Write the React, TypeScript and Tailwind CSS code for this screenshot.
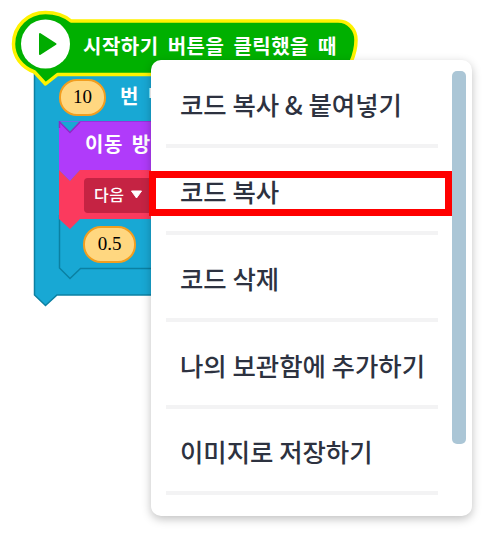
const items = ["코드 복사 & 붙여넣기", "코드 복사", "코드 삭제", "나의 보관함에 추가하기", "이미지로 저장하기"];

const blockFont = "[font-family:'Noto_Sans_CJK_KR',sans-serif]";

function Blocks() {
  return (
    <svg className="absolute left-0 top-0" width="488" height="535" viewBox="0 0 488 535">
      {/* blue loop */}
      <path
        d="M34.5 70H360V295H57L45.5 305.5L34.5 295Z"
        fill="#18a8d4"
        stroke="#0b80a2"
        strokeWidth="1.5"
      />
      <path d="M59.5 215V268L70 278.5L80.5 268.5H360" fill="none" stroke="#0b80a2" strokeWidth="1.5" />
      {/* purple */}
      <path d="M59 121H360V170H80L70 181L59 170Z" fill="#b03bfa" />
      <path d="M59 121.5L70 132L80 121.5" fill="#18a8d4" />
      <path d="M59.5 121V128M59.5 122L70 132.5L80 122" fill="none" stroke="#8a2cc6" strokeWidth="1.5" />
      <path d="M80 121.5H360" stroke="#9a30dc" strokeWidth="1" />
      {/* red */}
      <path d="M59 170L70 181L80 170H360V219H80L70 229L59 219Z" fill="#fb3a5e" />
      {/* green hat */}
      <path
        d="M45.5 12.5C56 12.5 65 16 71 21H338C349 21 356 30 356 40C356 52 349 74.5 338 74.5H57.5L45.5 84L34.5 72C21 67 13.5 56 13.5 44C13.5 26 28 12.5 45.5 12.5Z"
        fill="#00b000"
        stroke="#fff200"
        strokeWidth="3.5"
        strokeLinejoin="round"
      />
      <circle cx="45.5" cy="44" r="24.5" fill="#ffffff" />
      <path d="M40 34L55.5 44L40 54Z" fill="#00ac00" stroke="#00ac00" strokeWidth="2" strokeLinejoin="round" />
    </svg>
  );
}

function Pill({ text, className }: { text: string; className: string }) {
  return (
    <div
      className={`absolute flex items-center justify-center rounded-[18px] border-2 border-[#f29e1f] bg-[#ffd780] pb-px text-[19px] text-black [font-family:'Liberation_Serif',serif] ${className}`}
    >
      {text}
    </div>
  );
}

function Label({ text, className }: { text: string; className: string }) {
  return (
    <div className={`absolute whitespace-nowrap text-[20px] font-bold leading-none tracking-[0.5px] [word-spacing:4px] text-white ${blockFont} ${className}`}>
      {text}
    </div>
  );
}

export default function App() {
  return (
    <div className="relative h-[535px] w-[488px] overflow-hidden bg-white">
      <Blocks />
      <Label text="시작하기 버튼을 클릭했을 때" className="left-[83px] top-[36px]" />
      <Pill text="10" className="left-[59px] top-[79px] h-[37px] w-[47px]" />
      <Label text="번 반복" className="left-[120px] top-[86px]" />
      <Label text="이동 방향" className="left-[85px] top-[134px]" />
      <div className={`absolute left-[84px] top-[178px] flex h-[35px] w-[90px] items-center gap-[6px] rounded bg-[#c52343] pb-[3px] pl-[10px] text-[16px] font-medium tracking-[0.5px] text-white ${blockFont}`}>
        다음
        <svg width="13" height="9" viewBox="0 0 13 9">
          <path d="M1.5 1H11.5L6.5 8Z" fill="#fff" stroke="#fff" strokeLinejoin="round" />
        </svg>
      </div>
      <Pill text="0.5" className="left-[83px] top-[226px] h-[37px] w-[53px]" />

      <div className="absolute left-[151px] top-[60px] h-[456px] w-[321px] rounded-[10px] bg-white pl-[15px] pr-[34px] pt-[1.5px] shadow-[0_3px_10px_rgba(0,0,0,0.25)]">
        <ul className="flex flex-col">
          {items.map((t) => (
            <li
              key={t}
              className="flex h-[86.75px] items-center border-b-4 border-[#f3f3f4] pl-[14px] pt-[3px] text-[25.4px] font-medium text-[#2d3240] [font-family:'Noto_Sans_CJK_KR',sans-serif]"
            >
              {t}
            </li>
          ))}
        </ul>
        <div className="absolute left-[301px] top-[11px] h-[373px] w-[14px] rounded-[5px] bg-[#abc6d6]" />
      </div>
      <div className="absolute left-[149px] top-[171px] h-[45px] w-[303px] border-[7px] border-[#ff0000]" />
    </div>
  );
}
